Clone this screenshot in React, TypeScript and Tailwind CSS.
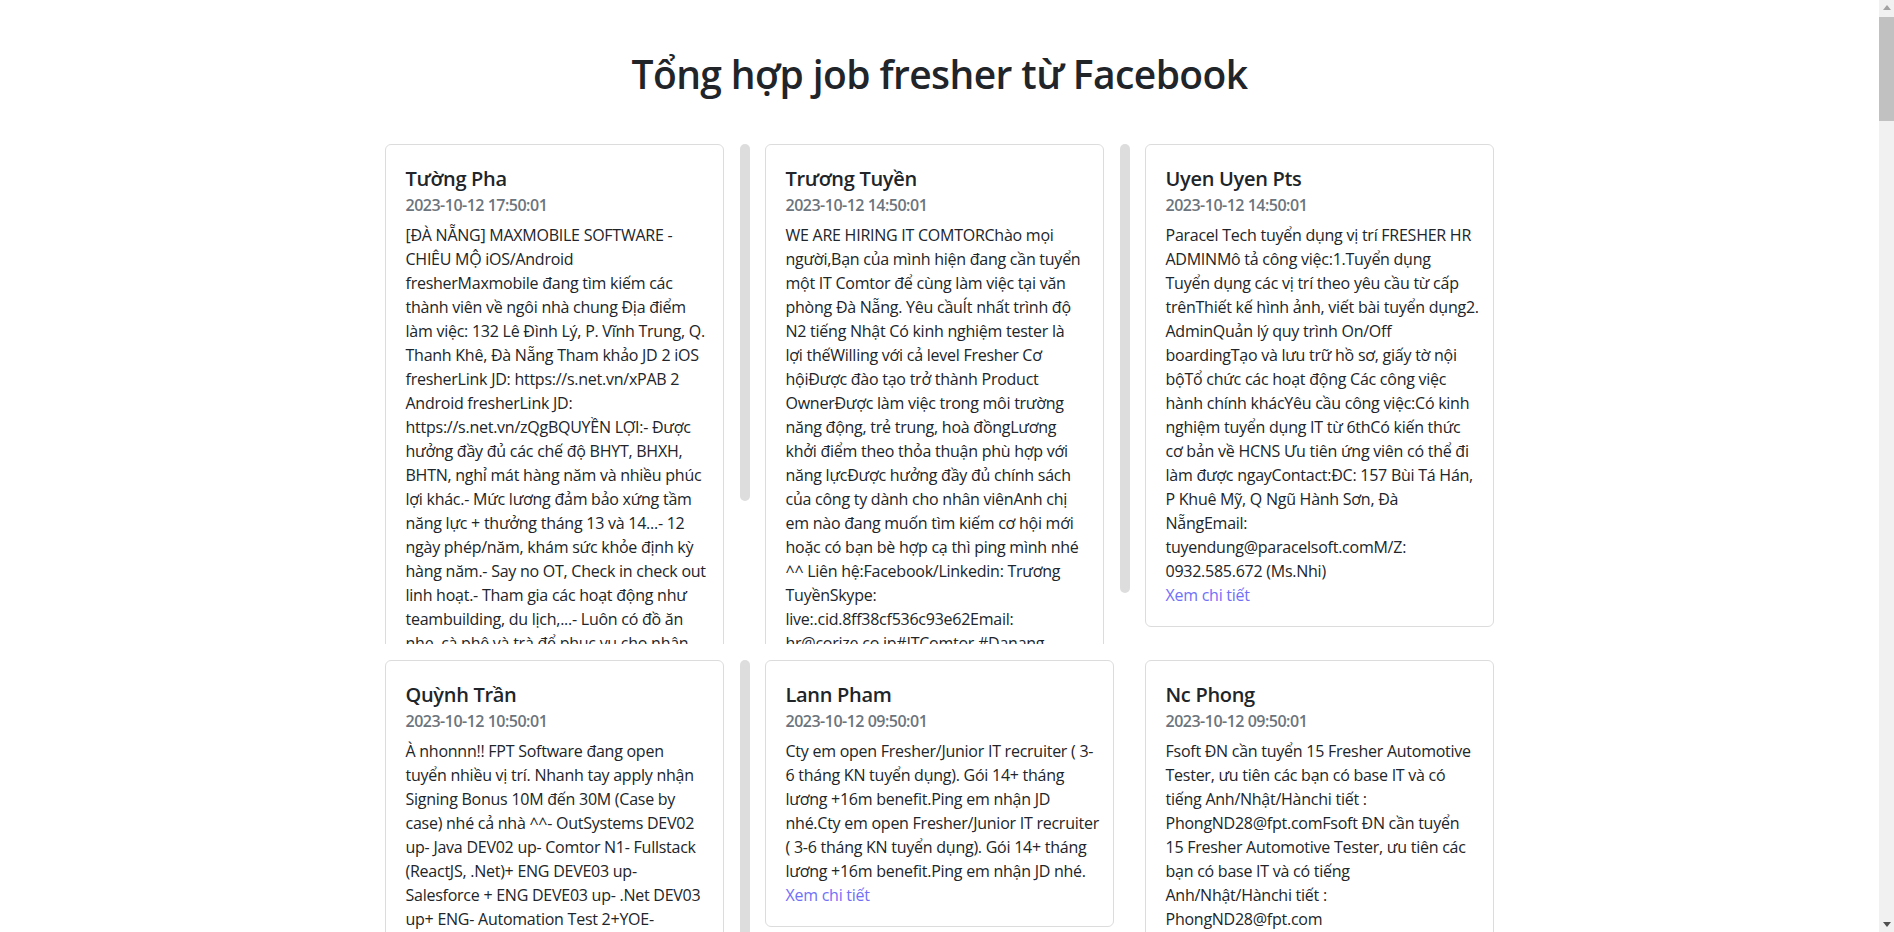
type Post = {
  name: string;
  time: string;
  lines: string[];
  thumb?: number;
  link?: boolean;
};

const row1: Post[] = [
  {
    name: "Tường Pha",
    time: "2023-10-12 17:50:01",
    thumb: 357,
    link: true,
    lines: [
      "[ĐÀ NẴNG] MAXMOBILE SOFTWARE -",
      "CHIÊU MỘ iOS/Android",
      "fresherMaxmobile đang tìm kiếm các",
      "thành viên về ngôi nhà chung Địa điểm",
      "làm việc: 132 Lê Đình Lý, P. Vĩnh Trung, Q.",
      "Thanh Khê, Đà Nẵng Tham khảo JD 2 iOS",
      "fresherLink JD: https://s.net.vn/xPAB 2",
      "Android fresherLink JD:",
      "https://s.net.vn/zQgBQUYỀN LỢI:- Được",
      "hưởng đầy đủ các chế độ BHYT, BHXH,",
      "BHTN, nghỉ mát hàng năm và nhiều phúc",
      "lợi khác.- Mức lương đảm bảo xứng tầm",
      "năng lực + thưởng tháng 13 và 14...- 12",
      "ngày phép/năm, khám sức khỏe định kỳ",
      "hàng năm.- Say no OT, Check in check out",
      "linh hoạt.- Tham gia các hoạt động như",
      "teambuilding, du lịch,...- Luôn có đồ ăn",
      "nhẹ, cà phê và trà để phục vụ cho nhân",
      "viên.- Môi trường làm việc trẻ trung,",
      "năng động.YÊU CẦU:- Sinh viên năm cuối",
      "hoặc mới tốt nghiệp- Có kiến thức cơ bản",
      "về iOS/Android- Liên hệ: hr@maxmobile",
      ".vn",
    ],
  },
  {
    name: "Trương Tuyền",
    time: "2023-10-12 14:50:01",
    thumb: 449,
    link: true,
    lines: [
      "WE ARE HIRING IT COMTORChào mọi",
      "người,Bạn của mình hiện đang cần tuyển",
      "một IT Comtor để cùng làm việc tại văn",
      "phòng Đà Nẵng. Yêu cầuÍt nhất trình độ",
      "N2 tiếng Nhật Có kinh nghiệm tester là",
      "lợi thếWilling với cả level Fresher Cơ",
      "hộiĐược đào tạo trở thành Product",
      "OwnerĐược làm việc trong môi trường",
      "năng động, trẻ trung, hoà đồngLương",
      "khởi điểm theo thỏa thuận phù hợp với",
      "năng lựcĐược hưởng đầy đủ chính sách",
      "của công ty dành cho nhân viênAnh chị",
      "em nào đang muốn tìm kiếm cơ hội mới",
      "hoặc có bạn bè hợp cạ thì ping mình nhé",
      "^^ Liên hệ:Facebook/Linkedin: Trương",
      "TuyềnSkype:",
      "live:.cid.8ff38cf536c93e62Email:",
      "hr@corize.co.jp#ITComtor #Danang",
    ],
  },
  {
    name: "Uyen Uyen Pts",
    time: "2023-10-12 14:50:01",
    link: true,
    lines: [
      "Paracel Tech tuyển dụng vị trí FRESHER HR",
      "ADMINMô tả công việc:1.Tuyển dụng",
      "Tuyển dụng các vị trí theo yêu cầu từ cấp",
      "trênThiết kế hình ảnh, viết bài tuyển dụng2.",
      "AdminQuản lý quy trình On/Off",
      "boardingTạo và lưu trữ hồ sơ, giấy tờ nội",
      "bộTổ chức các hoạt động Các công việc",
      "hành chính khácYêu cầu công việc:Có kinh",
      "nghiệm tuyển dụng IT từ 6thCó kiến thức",
      "cơ bản về HCNS Ưu tiên ứng viên có thể đi",
      "làm được ngayContact:ĐC: 157 Bùi Tá Hán,",
      "P Khuê Mỹ, Q Ngũ Hành Sơn, Đà",
      "NẵngEmail:",
      "tuyendung@paracelsoft.comM/Z:",
      "0932.585.672 (Ms.Nhi)",
    ],
  },
];

const row2: Post[] = [
  {
    name: "Quỳnh Trần",
    time: "2023-10-12 10:50:01",
    thumb: 380,
    link: true,
    lines: [
      "À nhonnn!! FPT Software đang open",
      "tuyển nhiều vị trí. Nhanh tay apply nhận",
      "Signing Bonus 10M đến 30M (Case by",
      "case) nhé cả nhà ^^- OutSystems DEV02",
      "up- Java DEV02 up- Comtor N1- Fullstack",
      "(ReactJS, .Net)+ ENG DEVE03 up-",
      "Salesforce + ENG DEVE03 up- .Net DEV03",
      "up+ ENG- Automation Test 2+YOE-",
      "Embedded C/C++ DEV02 up- Tester",
      "Fresher có tiếng Nhật N3 trở lên",
      "Inbox mình để được refer nhé!",
    ],
  },
  {
    name: "Lann Pham",
    time: "2023-10-12 09:50:01",
    link: true,
    lines: [
      "Cty em open Fresher/Junior IT recruiter ( 3-",
      "6 tháng KN tuyển dụng). Gói 14+ tháng",
      "lương +16m benefit.Ping em nhận JD",
      "nhé.Cty em open Fresher/Junior IT recruiter",
      "( 3-6 tháng KN tuyển dụng). Gói 14+ tháng",
      "lương +16m benefit.Ping em nhận JD nhé.",
    ],
  },
  {
    name: "Nc Phong",
    time: "2023-10-12 09:50:01",
    link: true,
    lines: [
      "Fsoft ĐN cần tuyển 15 Fresher Automotive",
      "Tester, ưu tiên các bạn có base IT và có",
      "tiếng Anh/Nhật/Hànchi tiết :",
      "PhongND28@fpt.comFsoft ĐN cần tuyển",
      "15 Fresher Automotive Tester, ưu tiên các",
      "bạn có base IT và có tiếng",
      "Anh/Nhật/Hànchi tiết :",
      "PhongND28@fpt.com",
    ],
  },
];

const PostCard = ({ post }: { post: Post }) => {
  return (
    <div className="flex max-h-[500px]">
      <div className="flex-1 min-w-0 overflow-hidden">
        <div className="ml-[5px] mr-4 rounded-md border border-[#dcdcdc] bg-white px-5 pt-[22px] pb-[19px]">
          <h5 className="mb-[5px] text-[20px] leading-[24px] font-semibold tracking-[-0.3px] text-[#212529]">
            {post.name}
          </h5>
          <h6 className="mb-2 text-base leading-[19px] font-semibold tracking-[-0.5px] text-[#6c757d]">
            {post.time}
          </h6>
          <div className="text-base leading-6 tracking-[-0.25px] text-[#212529]">
            {post.lines.map((line, i) => (
              <div key={i} className="whitespace-nowrap">
                {line}
              </div>
            ))}
          </div>
          {post.link && (
            <a href="#" className="block text-base leading-6 tracking-[-0.25px] text-[#7070f8]">
              Xem chi tiết
            </a>
          )}
        </div>
      </div>
      {post.thumb && (
        <div className="w-[10px] shrink-0">
          <div
            className="w-[10px] rounded-full bg-[#dddddd]"
            style={{ height: post.thumb }}
          />
        </div>
      )}
    </div>
  );
};

const PageScrollbar = () => (
  <div className="flex h-full w-[15px] shrink-0 flex-col bg-[#f1f1f1]">
    <div className="flex h-[15px] items-center justify-center">
      <svg width="8" height="5" viewBox="0 0 8 5">
        <path d="M0 5 L4 0 L8 5 Z" fill="#a3a3a3" />
      </svg>
    </div>
    <div className="mt-[2px] h-[104px] bg-[#c1c1c1]" />
    <div className="flex-1" />
    <div className="flex h-[15px] items-center justify-center">
      <svg width="8" height="5" viewBox="0 0 8 5">
        <path d="M0 0 L8 0 L4 5 Z" fill="#505050" />
      </svg>
    </div>
  </div>
);

export default function App() {
  return (
    <div className="flex h-screen overflow-hidden bg-white font-['Open_Sans',sans-serif] text-[#212529]">
      <div className="flex-1 overflow-hidden">
        <div className="mx-auto w-[1140px]">
          <h1 className="mt-[50px] mb-[46px] text-center text-[39px] leading-[48px] font-semibold tracking-[-0.6px]">
            Tổng hợp job fresher từ Facebook
          </h1>
          <div className="grid grid-cols-[repeat(3,370px)] gap-x-[10px] gap-y-4 pl-[10px]">
            {[...row1, ...row2].map((post, i) => (
              <PostCard key={i} post={post} />
            ))}
          </div>
        </div>
      </div>
      <PageScrollbar />
    </div>
  );
}
